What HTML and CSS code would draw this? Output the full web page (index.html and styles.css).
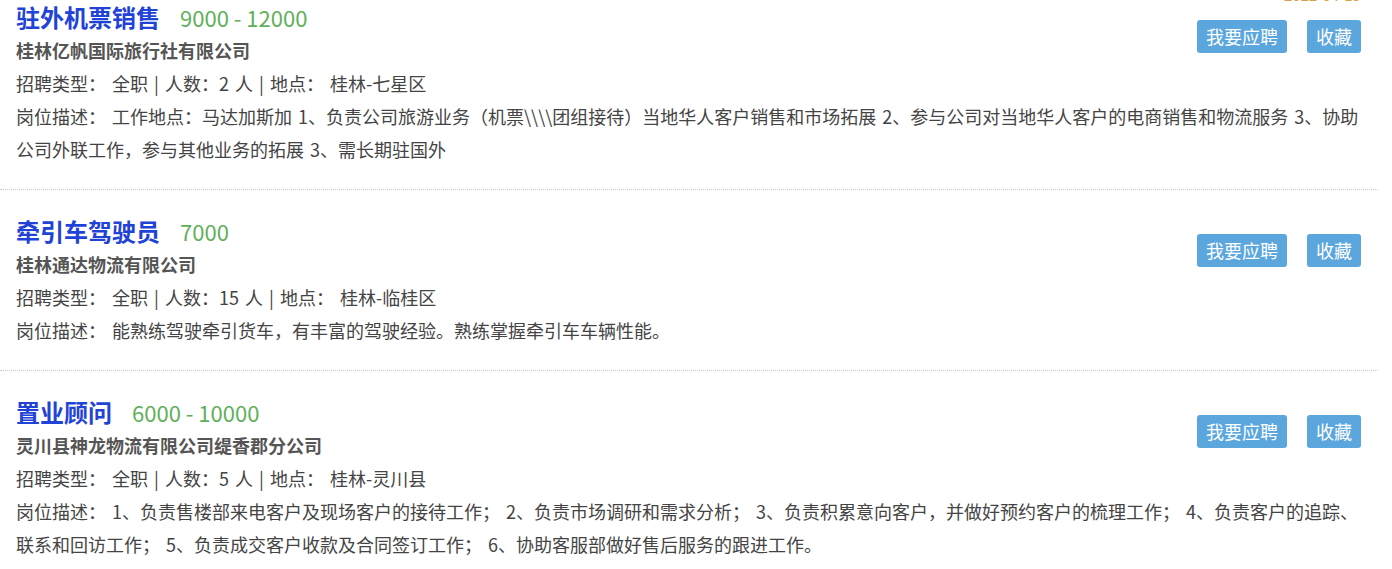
FILE: index.html
```html
<!DOCTYPE html>
<html lang="zh-CN">
<head>
    <meta charset="UTF-8">
    <meta name="viewport" content="width=device-width, initial-scale=1.0">
    <title>招聘信息</title>
    <link rel="stylesheet" href="styles.css">
</head>
<body>
    <div class="job-list">
        <div class="job-item">
            <span class="date">2022-04-19</span>
            <div class="job-head">
                <div class="job-main">
                    <div class="job-title"><a href="#">驻外机票销售</a><span class="salary">9000 - 12000</span></div>
                    <div class="company">桂林亿帆国际旅行社有限公司</div>
                    <div class="line">招聘类型： 全职 | 人数：2 人 | 地点： 桂林-七星区</div>
                </div>
                <div class="actions">
                    <button class="btn">我要应聘</button>
                    <button class="btn">收藏</button>
                </div>
            </div>
            <div class="line">岗位描述： 工作地点：马达加斯加 1、负责公司旅游业务（机票\\\\团组接待）当地华人客户销售和市场拓展 2、参与公司对当地华人客户的电商销售和物流服务 3、协助公司外联工作，参与其他业务的拓展 3、需长期驻国外</div>
        </div>

        <div class="job-item">
            <div class="job-head">
                <div class="job-main">
                    <div class="job-title"><a href="#">牵引车驾驶员</a><span class="salary">7000</span></div>
                    <div class="company">桂林通达物流有限公司</div>
                    <div class="line">招聘类型： 全职 | 人数：15 人 | 地点： 桂林-临桂区</div>
                </div>
                <div class="actions">
                    <button class="btn">我要应聘</button>
                    <button class="btn">收藏</button>
                </div>
            </div>
            <div class="line">岗位描述： 能熟练驾驶牵引货车，有丰富的驾驶经验。熟练掌握牵引车车辆性能。</div>
        </div>

        <div class="job-item">
            <div class="job-head">
                <div class="job-main">
                    <div class="job-title"><a href="#">置业顾问</a><span class="salary">6000 - 10000</span></div>
                    <div class="company">灵川县神龙物流有限公司缇香郡分公司</div>
                    <div class="line">招聘类型： 全职 | 人数：5 人 | 地点： 桂林-灵川县</div>
                </div>
                <div class="actions">
                    <button class="btn">我要应聘</button>
                    <button class="btn">收藏</button>
                </div>
            </div>
            <div class="line">岗位描述： 1、负责售楼部来电客户及现场客户的接待工作； 2、负责市场调研和需求分析； 3、负责积累意向客户，并做好预约客户的梳理工作； 4、负责客户的追踪、联系和回访工作； 5、负责成交客户收款及合同签订工作； 6、协助客服部做好售后服务的跟进工作。</div>
        </div>
    </div>
</body>
</html>
```

FILE: styles.css
```css
body {
    margin: 0;
    font-family: "Noto Sans CJK SC", "Microsoft YaHei", sans-serif;
    color: #444;
    background: #fff;
    overflow: hidden;
}
.job-list {
    width: 1378px;
    margin-top: -24px;
}
.job-item {
    position: relative;
    padding: 24px 16px 23px;
    border-bottom: 1px dotted #c8c8c8;
}
.date {
    position: absolute;
    top: 8px;
    right: 17px;
    font-size: 15px;
    color: #d9a04a;
}
.job-head {
    display: flex;
    justify-content: space-between;
    align-items: flex-start;
}
.job-title {
    height: 34px;
    line-height: 34px;
    display: flex;
    align-items: center;
}
.job-title a {
    font-size: 24px;
    font-weight: bold;
    color: #1f43d6;
    text-decoration: none;
}
.salary {
    margin-left: 20px;
    font-size: 22px;
    color: #5fb05a;
}
.company {
    font-size: 18px;
    font-weight: bold;
    color: #555;
    line-height: 33px;
}
.line {
    font-size: 18px;
    line-height: 33px;
    color: #444;
    word-spacing: 2px;
}
.actions {
    display: flex;
    gap: 20px;
    margin-top: 20px;
    margin-right: 1px;
}
.btn {
    height: 33px;
    padding: 0 9px;
    border: none;
    border-radius: 3px;
    background-color: #5ca6de;
    color: #fff;
    font-family: inherit;
    font-size: 18px;
    line-height: 33px;
}
```
